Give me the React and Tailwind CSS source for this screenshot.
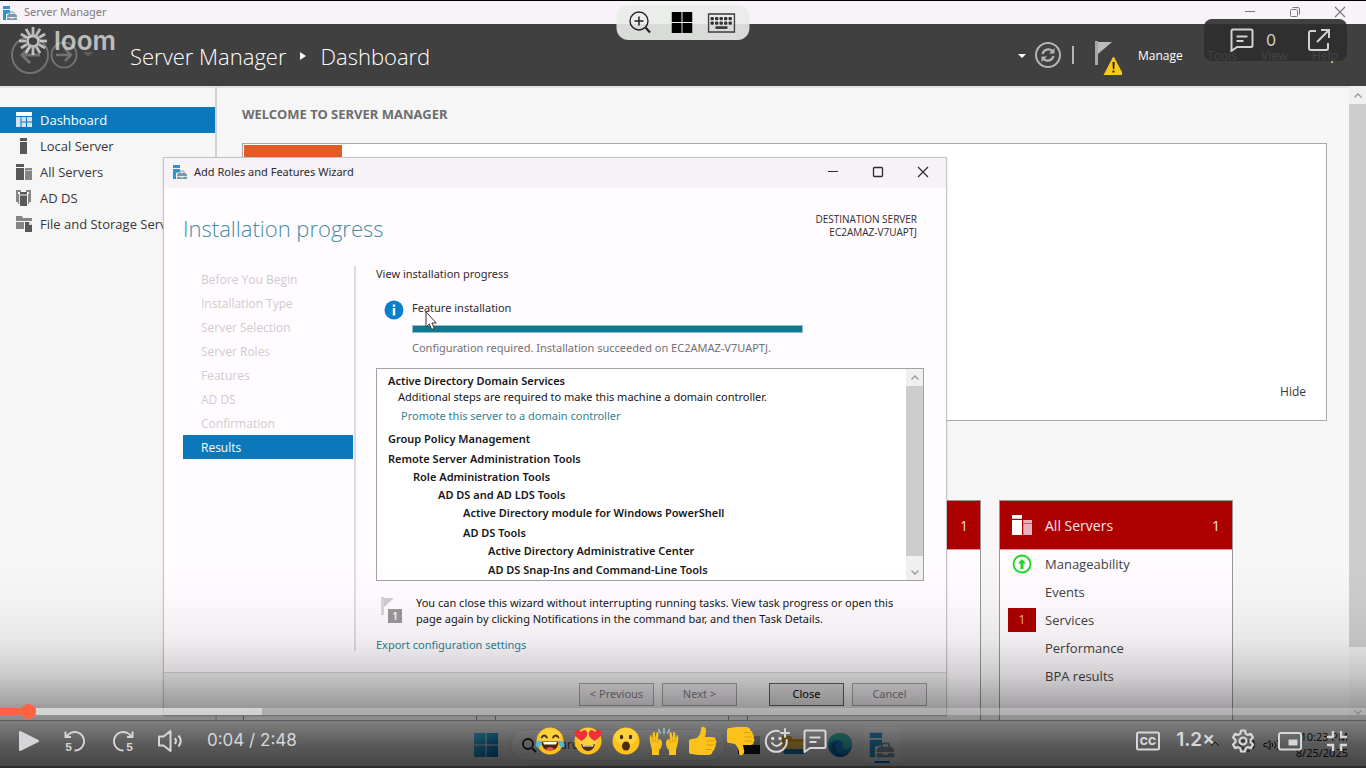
import React from "react";

function ServerManagerIcon({ className }) {
  return (
    <svg viewBox="0 0 16 16" className={className} aria-hidden="true">
      <path d="M1 1h7v3H1z" fill="#2f93cf" />
      <path d="M1 5h7v3L4 9v6H1z" fill="#2f93cf" />
      <path d="M8 9V7.500Q8 7 8.500 7h3q.5 0 .5.500V9" fill="none" stroke="#7899a6" />
      <path d="M5 10.500 6.500 9h7l1.500 1.500V12H5zM5 12.700h3.500v.8h3v-.8H15V15H5z" fill="#7899a6" />
    </svg>
  );
}

function DashboardIcon() {
  return (
    <svg viewBox="0 0 16 16" className="size-4" aria-hidden="true">
      <path d="M0 0h16v4H0z" fill="#fff" />
      <path d="M0 5h4.500v10H0zM5.500 5h4.500v4.500H5.500zM11 5h5v4.500h-5zM5.500 10.500h4.500V15H5.500zM11 10.500h5V15h-5z" fill="#cfe3f1" />
    </svg>
  );
}

function LocalServerIcon() {
  return (
    <svg viewBox="0 0 16 16" className="size-4" aria-hidden="true">
      <path d="M4 0h7v3H4zM4 4h7v12H4z" fill="#585858" />
    </svg>
  );
}

function AllServersIcon({ className, front, back }) {
  return (
    <svg viewBox="0 0 16 16" className={className} aria-hidden="true">
      <path d="M0 0h8v3H0zM0 4h8v12H0z" fill={front} />
      <path d="M9 4h7v2.500H9zM9 7h7v9H9z" fill={back} />
    </svg>
  );
}

function AdDsIcon() {
  return (
    <svg viewBox="0 0 16 16" className="size-4" aria-hidden="true">
      <path d="M0 0h5v2H2v10H0zM15 0h-5v2h3v10h2z" fill="#858585" />
      <path d="M4 2h7v2.500H4zM4 5.500h7V16H4z" fill="#585858" />
      <path d="M2 4h1.200v10H2zM12 4h1.200v10H12z" fill="#858585" />
    </svg>
  );
}

function StorageIcon() {
  return (
    <svg viewBox="0 0 16 16" className="size-4" aria-hidden="true">
      <path d="M0 0h6l1 2h9v3H0zM0 6h8v7H0z" fill="#858585" />
      <path d="M9 6h4l3 3v7H9z" fill="#585858" />
      <path d="M13 6v3h3z" fill="#ddd" />
    </svg>
  );
}

function Minimize() {
  return (
    <svg viewBox="0 0 12 12" className="size-3" fill="none" stroke="currentColor" aria-hidden="true">
      <path d="M1 5.500h10" />
    </svg>
  );
}
function Maximize() {
  return (
    <svg viewBox="0 0 12 12" className="size-3" fill="none" stroke="currentColor" aria-hidden="true">
      <rect x="1.500" y="1.500" width="9" height="9" rx="1" strokeWidth="1.300" />
    </svg>
  );
}
function Restore() {
  return (
    <svg viewBox="0 0 12 12" className="size-3" fill="none" stroke="currentColor" aria-hidden="true">
      <rect x="1.500" y="3.500" width="7" height="7" rx="1" />
      <path d="M3.500 1.500h5.500q1.500 0 1.500 1.500v5.500" />
    </svg>
  );
}
function Close() {
  return (
    <svg viewBox="0 0 12 12" className="size-3" fill="none" stroke="currentColor" aria-hidden="true">
      <path d="M1 1l10 10M11 1L1 11" strokeWidth="1.200" />
    </svg>
  );
}
function Chevron({ down }) {
  return (
    <svg viewBox="0 0 10 10" className="size-2.5" fill="none" stroke="#9a9a9a" strokeWidth="1.300" aria-hidden="true">
      <path d={down ? "M1.500 3.500 5 7l3.500-3.500" : "M1.500 6.500 5 3l3.500 3.500"} />
    </svg>
  );
}

const NAV = [
  ["Dashboard", <DashboardIcon />],
  ["Local Server", <LocalServerIcon />],
  ["All Servers", <AllServersIcon className="size-4" front="#585858" back="#858585" />],
  ["AD DS", <AdDsIcon />],
  ["File and Storage Services", <StorageIcon />],
];

function TitleBar() {
  return (
    <div className="flex h-6 shrink-0 items-center justify-between border-t border-black bg-[#f8f3f8] pl-0.5 text-[#7d7a7d]">
      <div className="flex items-center gap-1.5">
        <ServerManagerIcon className="size-4" />
        <span className="text-[11px] font-['Noto_Sans',sans-serif]">Server Manager</span>
      </div>
      <div className="flex gap-[33px] pr-5 pb-0.5">
        <button aria-label="Minimize"><Minimize /></button>
        <button aria-label="Restore"><Restore /></button>
        <button aria-label="Close window"><Close /></button>
      </div>
    </div>
  );
}

function HeaderBar() {
  return (
    <header className="flex h-[62px] shrink-0 items-center justify-between bg-[#404040] pl-2.5 text-white">
      <div className="flex items-center">
        <svg viewBox="0 0 84 40" className="h-10 w-[84px]" fill="none" stroke="#727272" aria-hidden="true">
          <circle cx="20" cy="20" r="18" strokeWidth="2" />
          <path d="M30 20H12m8-8-8 8 8 8" strokeWidth="3" />
          <circle cx="54" cy="20" r="12.500" strokeWidth="2" />
          <path d="M46 20h15m-6-6 6 6-6 6" strokeWidth="2.500" />
          <path d="M73 17h10l-5 5z" fill="#5c5c5c" stroke="none" />
        </svg>
        <div className="ml-9 flex items-center gap-3.5 pt-0.5 text-[22px] font-light">
          <span>Server Manager</span>
          <svg viewBox="0 0 6 8" className="h-2 w-1.5" aria-hidden="true"><path d="M0 0l6 4-6 4z" fill="#fff" /></svg>
          <span>Dashboard</span>
        </div>
      </div>
      <div className="flex items-center pr-7">
        <svg viewBox="0 0 60 40" className="h-10 w-[60px]" fill="none" aria-hidden="true">
          <path d="M0 19h8l-4 4z" fill="#fff" />
          <circle cx="30" cy="20" r="12" stroke="#b5b5b5" strokeWidth="2" />
          <path d="M24.500 19a6 6 0 0 1 10-3M35.500 21a6 6 0 0 1-10 3" stroke="#b5b5b5" strokeWidth="2.200" />
          <path d="M36.500 13v5.500H31zM23.500 27v-5.500H29z" fill="#b5b5b5" />
          <path d="M55 11v18" stroke="#b5b5b5" strokeWidth="2" />
        </svg>
        <svg viewBox="0 0 32 40" className="ml-3 h-10 w-8" aria-hidden="true">
          <path d="M5 6h3v24H5z" fill="#a8a8a8" />
          <path d="M8 7h14L8 19z" fill="#bcbcbc" />
          <path d="M23.500 22 33 40H14z" fill="#f9c81c" stroke="#f9c81c" strokeLinejoin="round" />
          <path d="M22.500 27h2.200l-.4 7h-1.400zM22.500 35.500h2v2h-2z" fill="#222" />
        </svg>
        <nav className="ml-4 flex w-[200px] justify-between pt-0.5 text-[12px]">
          <a href="#manage">Manage</a>
          <a href="#tools">Tools</a>
          <a href="#view">View</a>
          <a href="#help">Help</a>
        </nav>
      </div>
    </header>
  );
}

function ScrollBar({ className, thumb }) {
  return (
    <div className={"flex w-[17px] shrink-0 flex-col items-center bg-[#f0f0f0] " + className}>
      <div className="flex h-[17px] items-center"><Chevron /></div>
      <div className={"w-full bg-[#cdcdcd] " + thumb} />
      <div className="flex-1" />
      <div className="flex h-[17px] items-center"><Chevron down /></div>
    </div>
  );
}

function CollapsedTile({ count }) {
  return (
    <section className="h-[260px] w-[234px] shrink-0 border border-[#979597] bg-[#fffbff]">
      <div className="flex h-[49px] items-center justify-end border-b border-[#e58e9c] bg-[#ac0000] px-3 text-[14px] text-[#f6dede]">{count}</div>
    </section>
  );
}

function ServersTile() {
  const rows = ["Manageability", "Events", "Services", "Performance", "BPA results"];
  return (
    <section className="h-[260px] w-[234px] shrink-0 border border-[#979597] bg-[#fffbff]">
      <div className="flex h-[49px] items-center border-b border-[#e58e9c] bg-[#ac0000] pr-3 text-[14px] text-[#f8e4e6]">
        <div className="flex w-11 justify-center"><AllServersIcon className="size-5" front="#fff" back="#e6b3bb" /></div>
        <span className="pt-px pl-px">All Servers</span>
        <span className="ml-auto pt-px">1</span>
      </div>
      <div className="flex flex-col text-[12px] text-[#424042]">
        {rows.map((r, i) => (
          <div key={r} className="flex h-7 items-center">
            <div className="flex w-11 justify-center">
              {i === 0 && (
                <svg viewBox="0 0 20 20" className="size-5" aria-hidden="true">
                  <circle cx="10" cy="10" r="8.500" fill="none" stroke="#1fd51f" strokeWidth="1.800" />
                  <path d="M10 5l4 4.500h-2.500V15h-3V9.500H6z" fill="#1fd51f" />
                </svg>
              )}
              {i === 2 && <span className="flex h-6 w-7 items-center justify-center bg-[#ac0000] text-[#f3b4b4]">1</span>}
            </div>
            <a href="#servers" className="pt-0.5 pl-px text-[13px]">{r}</a>
          </div>
        ))}
      </div>
    </section>
  );
}

const STEPS = ["Before You Begin", "Installation Type", "Server Selection", "Server Roles", "Features", "AD DS", "Confirmation", "Results"];

const RESULTS = [
  ["Group Policy Management", "mt-[7px]"],
  ["Remote Server Administration Tools", "mt-1"],
  ["Role Administration Tools", "mt-0.5 pl-[25px]"],
  ["AD DS and AD LDS Tools", "mt-0.5 pl-[50px]"],
  ["Active Directory module for Windows PowerShell", "mt-0.5 pl-[75px]"],
  ["AD DS Tools", "mt-1 pl-[75px]"],
  ["Active Directory Administrative Center", "mt-0.5 pl-[100px]"],
  ["AD DS Snap-Ins and Command-Line Tools", "mt-[3px] pl-[100px]"],
];

function WizardButton({ children, strong }) {
  return (
    <button className={"h-[23px] w-[75px] border text-[11px] " + (strong ? "border-[#5e5c5e] bg-[#dedcde] text-black" : "border-[#a3a1a3] bg-[#e9e5e9] text-[#7d7a7d]")}>
      {children}
    </button>
  );
}

function Wizard() {
  return (
    <div role="dialog" aria-label="Add Roles and Features Wizard" className="absolute top-[157px] left-[163px] w-[784px] border border-[#c4c2c4] bg-[#fffbff] font-['Noto_Sans',sans-serif] text-[11px] leading-4 text-[#2d2b2d] shadow-sm">
      <div className="flex h-[30px] items-center justify-between bg-[#f6f2f6] pr-[17px] pb-0.5 pl-2">
        <div className="flex items-center gap-1.5">
          <ServerManagerIcon className="size-4" />
          <span>Add Roles and Features Wizard</span>
        </div>
        <div className="flex gap-[33px]">
          <button aria-label="Minimize wizard"><Minimize /></button>
          <button aria-label="Maximize wizard"><Maximize /></button>
          <button aria-label="Close wizard"><Close /></button>
        </div>
      </div>
      <div className="flex h-[78px] items-start justify-between pr-[29px] pl-[19px]">
        <h2 className="pt-6 font-['Open_Sans',sans-serif] text-[22px] leading-8 font-light text-[#3f8ea3]">Installation progress</h2>
        <div className="pt-[25px] text-right font-['Open_Sans',sans-serif] text-[10px] leading-[13px]">DESTINATION SERVER<br />EC2AMAZ-V7UAPTJ</div>
      </div>
      <div className="flex h-[385px] pr-[22px] pl-[19px]">
        <ol className="w-[173px] shrink-0 border-r-2 border-[#dfdbdf] pt-px font-['Open_Sans',sans-serif] pr-px text-[12px] text-[#cfcccf]">
          {STEPS.map((s, i) => (
            <li key={s} className={"flex h-6 items-center pt-0.5 pl-[18px] " + (i === 7 ? "bg-[#0a78ba] text-white" : "")}>{s}</li>
          ))}
        </ol>
        <div className="flex min-w-0 flex-1 flex-col pl-5">
          <p>View installation progress</p>
          <div className="mt-[18px] flex gap-2 pl-2">
            <svg viewBox="0 0 20 20" className="size-5 shrink-0" aria-hidden="true">
              <circle cx="10" cy="10" r="9.500" fill="#0a80cc" />
              <path d="M8.800 4.500h2.400v2.200H8.800zM8.800 8h2.400v7.500H8.800z" fill="#fff" />
            </svg>
            <div>
              <p>Feature installation</p>
              <div role="progressbar" aria-valuenow={100} aria-label="Feature installation" className="mt-[9px] h-2 w-[391px] border border-[#8fc0c8] bg-[#0b7a90]" />
              <p className="mt-[7px] text-[#737173]">Configuration required. Installation succeeded on EC2AMAZ-V7UAPTJ.</p>
            </div>
          </div>
          <div className="mt-3 flex h-[213px] shrink-0 overflow-hidden border border-[#a3a1a8] bg-white text-[#171617]">
            <div className="flex-1 pt-1 pl-[11px]">
              <p className="font-semibold">Active Directory Domain Services</p>
              <p className="pl-2.5">Additional steps are required to make this machine a domain controller.</p>
              <p className="mt-[3px] pl-[13px]"><a href="#promote" className="text-[#2f8294]">Promote this server to a domain controller</a></p>
              {RESULTS.map(([t, c]) => <p key={t} className={"font-semibold " + c}>{t}</p>)}
            </div>
            <ScrollBar className="" thumb="h-[170px]" />
          </div>
          <div className="mt-3.5 flex items-start gap-3">
            <svg viewBox="0 0 28 28" className="h-7 w-7 shrink-0" aria-hidden="true">
              <path d="M5 2h3v18H5z" fill="#d9d6d9" />
              <path d="M8 3h10L8 12z" fill="#cfcccf" />
              <rect x="12" y="14" width="14" height="14" fill="#9a969a" />
              <text x="19" y="25" textAnchor="middle" fontSize="10" fontWeight="600" fill="#fff">1</text>
            </svg>
            <p className="w-[500px] text-[#171617]">You can close this wizard without interrupting running tasks. View task progress or open this page again by clicking Notifications in the command bar, and then Task Details.</p>
          </div>
          <a href="#export" className="mt-2.5 text-[#2f8294]">Export configuration settings</a>
        </div>
      </div>
      <div className="mt-[21px] flex h-[43px] items-center justify-end border-t border-[#d6d2d6] bg-[#f0f0f0] pr-[19px]">
        <div className="flex gap-2"><WizardButton>&lt; Previous</WizardButton><WizardButton>Next &gt;</WizardButton></div>
        <div className="ml-8 flex gap-2"><WizardButton strong>Close</WizardButton><WizardButton>Cancel</WizardButton></div>
      </div>
    </div>
  );
}

function TaskBar() {
  return (
    <footer className="relative flex h-12 shrink-0 items-center justify-center border-t border-[#a0a0a0] bg-[#e6e6e6]">
      <div className="flex items-center pl-2">
        <svg viewBox="0 0 24 24" className="size-6" aria-label="Start">
          <defs><linearGradient id="win" x1="0" y1="0" x2="1" y2="1"><stop offset="0" stopColor="#3ec0e6" /><stop offset="1" stopColor="#0067b8" /></linearGradient></defs>
          <path d="M0 0h11.500v11.500H0zM12.500 0H24v11.500H12.500zM0 12.500h11.500V24H0zM12.500 12.500H24V24H12.500z" fill="url(#win)" />
        </svg>
        <div className="ml-3 flex h-8 w-[216px] items-center gap-2.5 rounded-full border border-[#d5d5d5] bg-[#f0f0f0] pl-2.5 text-[12px] text-[#444]">
          <svg viewBox="0 0 16 16" className="size-4" fill="none" stroke="#222" strokeWidth="1.800" aria-hidden="true"><circle cx="7" cy="7" r="5" /><path d="m11 11 4 4" /></svg>
          Search
        </div>
        <svg viewBox="0 0 24 24" className="ml-2.5 size-6" aria-hidden="true"><path d="M8 3h16v9H8z" fill="#aaa" /><path d="M2 12h22v9H2z" fill="#151515" /></svg>
        <svg viewBox="0 0 28 24" className="ml-5 h-6 w-7" aria-hidden="true"><path d="M2 3h9l2 3h13v14H2z" fill="#d69a2a" /><path d="M2 9h24v9H2z" fill="#f0bd45" /><path d="M4 16h20v5H4z" fill="#1777b8" /></svg>
        <svg viewBox="0 0 24 24" className="ml-5 size-6" aria-hidden="true">
          <circle cx="12" cy="12" r="12" fill="#1583c7" />
          <path d="M0 12C0 4 6 0 12 0c7 0 12 5 12 10 0 4-3 6-6 6-3 0-4-1-3-3 1-3-1-6-5-6-5 0-9 3-10 7z" fill="#39b8b0" />
          <path d="M10 7c-4 3-4 10 1 13 4 2 8 1 10-1-3 5-9 6-13 4C1 20 2 9 10 7z" fill="#125ea8" />
        </svg>
        <div className="ml-3 flex h-9 w-9 flex-col items-center justify-between rounded bg-[#f3f3f3]/60 pt-1">
          <ServerManagerIcon className="size-7" />
          <span className="h-0.5 w-4 rounded bg-[#0078d4]" />
        </div>
      </div>
      <div className="absolute right-[18px] flex items-center gap-4 text-right font-['Noto_Sans',sans-serif] text-[11px] leading-4 text-[#1c1c1c]">
        <svg viewBox="0 0 70 16" className="h-4 w-[70px]" fill="none" stroke="#222" aria-hidden="true">
          <path d="m1 9 4-4 4 4M30 4h14v7H30zM34 14h6" />
          <path d="M54 6.500h2.500L60 3.500v9l-3.500-3H54zM62 6q1.500 2 0 4M64.500 4.500q3 3.500 0 7M67 3q4 5 0 10" />
        </svg>
        <div>10:23 PM<br />8/25/2025</div>
      </div>
    </footer>
  );
}

function LoomLogo() {
  return (
    <a href="#loom" aria-label="loom home" className="absolute top-[25px] left-[18px] flex items-center gap-1.5 text-white/65">
      <svg viewBox="0 0 30 30" className="size-[30px]" fill="none" stroke="currentColor" strokeWidth="2.800" aria-hidden="true">
        <circle cx="15" cy="15" r="5.500" />
        {[0, 30, 60, 90, 120, 150, 180, 210, 240, 270, 300, 330].map((a) => (
          <path key={a} d="M15 1v7" transform={`rotate(${a} 15 15)`} />
        ))}
      </svg>
      <span className="font-[Inter] text-[26px] leading-8 font-semibold">loom</span>
    </a>
  );
}

function CommentIcon({ className }) {
  return (
    <svg viewBox="0 0 24 24" className={className} fill="none" stroke="currentColor" strokeWidth="2" strokeLinejoin="round" aria-hidden="true">
      <path d="M2 1.500h19q1.500 0 1.500 1.500v14.500q0 1.500-1.500 1.500H7l-5.500 4V3q0-1.500 1.500-1.500M6.500 8.500h11M6.500 13h7" />
    </svg>
  );
}

function TopOverlays() {
  return (
    <>
      <div className="absolute top-[5px] left-1/2 flex h-[35px] w-[133px] -translate-x-1/2 items-center justify-between rounded-xl bg-[#e9ece9]/90 pr-3.5 pl-3">
        <button aria-label="Zoom in">
          <svg viewBox="0 0 24 24" className="size-6" fill="none" stroke="#222" aria-hidden="true">
            <circle cx="10.500" cy="10" r="9" strokeWidth="1.400" /><path d="M6 10h9M10.500 5.500v9" strokeWidth="1.500" /><path d="m17 16.500 4.500 5" strokeWidth="2.200" />
          </svg>
        </button>
        <button aria-label="Windows key" className="pl-1">
          <svg viewBox="0 0 21 21" className="size-[21px]" aria-hidden="true"><path d="M0 0h10v10H0zM11 0h10v10H11zM0 11h10v10H0zM11 11h10v10H11z" /></svg>
        </button>
        <button aria-label="Keyboard">
          <svg viewBox="0 0 28 20" className="h-5 w-7" fill="#333" aria-hidden="true">
            <rect x="1" y="1" width="26" height="18" fill="none" stroke="#444" strokeWidth="1.600" />
            {[3, 7.500, 12, 16.500, 21].map((x) => <g key={x}><rect x={x} y="4" width="3.400" height="3.200" rx="1" /><rect x={x} y="8.500" width="3.400" height="3.200" rx="1" /></g>)}
            <rect x="8" y="13.300" width="12" height="2.600" />
          </svg>
        </button>
      </div>
      <div className="absolute top-[19px] right-[19px] flex h-[42px] w-[143px] items-center justify-between rounded-lg bg-[#2d2d2d]/90 pr-4 pl-[26px] text-[#d2d2d2]">
        <button aria-label="Comments" className="flex items-center gap-3 font-[Inter] text-[16px]"><CommentIcon className="size-6" />0</button>
        <button aria-label="Open in new tab">
          <svg viewBox="0 0 24 24" className="size-6" fill="none" stroke="currentColor" strokeWidth="2" aria-hidden="true">
            <path d="M9 3H4Q2 3 2 5v15q0 2 2 2h15q2 0 2-2v-5M10 14 21.500 2.500M14 2h8v8" />
          </svg>
        </button>
      </div>
    </>
  );
}

function Face({ children }) {
  return (
    <svg viewBox="0 0 30 30" className="size-[30px]" aria-hidden="true">
      <circle cx="15" cy="15" r="13.500" fill="#fcc21b" />
      <ellipse cx="15" cy="11" rx="11" ry="9" fill="#ffd23c" />
      {children}
    </svg>
  );
}
function Thumb({ down }) {
  return (
    <svg viewBox="0 0 30 30" className={"size-[30px] " + (down ? "-scale-y-100" : "")} aria-hidden="true">
      <path d="M2 15q0-2 3-2l5-1q4-4 4-9 0-2.500 2.500-2.200Q20 2 19 6l-1 5h8q3 .5 2.500 3 2 2 0 4 1 2.500-1 4 .5 2.500-2 3.500 0 3-3.500 3.500H11l-6-1H4q-2 0-2-2z" fill="#fcc21b" />
      <path d="M20 15h7M20 19h6.500M19.500 23.500h5" stroke="#e39a10" strokeWidth="1.200" strokeLinecap="round" fill="none" />
    </svg>
  );
}

const EMOJIS = [
  ["Laugh", <Face>
    <path d="M6.500 11.500q2.700-4 5.500 0M18 11.500q2.700-4 5.500 0" fill="none" stroke="#47301b" strokeWidth="1.800" strokeLinecap="round" />
    <path d="M6.500 15.500h17q0 9-8.500 9t-8.500-9z" fill="#47250f" />
    <path d="M8 16h14l-1 2.500H9z" fill="#fff" />
    <path d="M10.500 23q4.500-4 9 0-4.500 2.500-9 0z" fill="#ef4d4d" />
    <path d="M6.500 14.500q-6 .5-6 4.500 1 3.500 4 2 2-2 2-6.500zM23.500 14.500q6 .5 6 4.500-1 3.500-4 2-2-2-2-6.500z" fill="#4bb7ec" />
  </Face>],
  ["Love", <Face>
    <path d="M8.500 15Q-1 9 2 5q3-3 6 1 4-4 6 0 1.500 5-5.500 9zM21.500 15Q31 9 28 5q-3-3-6 1-4-4-6 0-1.500 5 5.500 9z" fill="#ee3038" />
    <path d="M8 18q7 3 14 0-1.500 7-7 7t-7-7z" fill="#522d10" />
    <path d="M9.500 18.700q5.500 1.800 11 0l-.6 1.700h-9.800z" fill="#fff" />
  </Face>],
  ["Wow", <Face>
    <ellipse cx="10.500" cy="11" rx="1.700" ry="2.300" fill="#422b0d" /><ellipse cx="19.500" cy="11" rx="1.700" ry="2.300" fill="#422b0d" />
    <ellipse cx="15" cy="20" rx="4" ry="4.500" fill="#4a2b10" />
  </Face>],
  ["Celebrate", <svg viewBox="0 0 30 30" className="size-[30px]" aria-hidden="true">
    <path d="M15 2v6M9.500 3l2 4.500M20.500 3l-2 4.500" stroke="#a7c3cf" strokeWidth="1.500" />
    {["", "translate(30 0) scale(-1 1)"].map((t) => (
      <g key={t} transform={t}>
        <path d="M1 16q-1-6 1-7.500l1 5 1-7q1.500-1.200 2 0l.2 6 1.300-6q1.500-1 2 0L9 14l1-1q3 .5 3 4 0 5-3 7v5H3v-5z" fill="#fcc21b" />
        <path d="M3.700 13v3M6.300 13v3M9 13.500 8.500 17" stroke="#e5a012" fill="none" />
      </g>
    ))}
  </svg>],
  ["Like", <Thumb />],
  ["Dislike", <Thumb down />],
];

function Player() {
  return (
    <div className="absolute inset-x-0 bottom-0 font-[Inter] text-[#d6d6da]">
      <div className="flex h-[200px] flex-col justify-end bg-[linear-gradient(to_bottom,rgba(0,0,0,0)_0px,rgba(0,0,0,0.015)_32px,rgba(0,0,0,0.06)_72px,rgba(0,0,0,0.175)_107px,rgba(0,0,0,0.35)_137px,rgba(0,0,0,0.45)_154px,rgba(0,0,0,0.61)_177px,rgba(0,0,0,0.71)_200px)]">
        <div role="slider" aria-label="Seek" aria-valuenow={4} aria-valuemax={168} tabIndex={0} className="flex h-[7px] items-center bg-white/25">
          <div className="h-full w-7 bg-[#ff6340]" />
          <div className="-ml-[7px] size-[15px] shrink-0 rounded-full bg-[#ff6340]" />
          <div className="-ml-2 h-full w-[234px] bg-white/45 [clip-path:inset(0_0_0_8px)]" />
        </div>
        <div className="grid h-[53px] grid-cols-[1fr_auto_1fr] items-center border-b-2 border-[#2c2c2c]">
          <div className="flex items-center pl-4">
            <button aria-label="Play"><svg viewBox="0 0 24 24" className="size-6" aria-hidden="true"><path d="M4 3v18l18-9z" fill="currentColor" stroke="currentColor" strokeWidth="2" strokeLinejoin="round" /></svg></button>
            <button aria-label="Back 5 seconds" className="ml-[23px]">
              <svg viewBox="0 0 24 24" className="size-6" fill="none" stroke="currentColor" strokeWidth="2" aria-hidden="true"><path d="M2.500 2.500V8H8M3.500 8a9.300 9.300 0 1 1 8 13.500" /><text x="2" y="22" fontSize="11" fontWeight="700" fill="currentColor" stroke="none">5</text></svg>
            </button>
            <button aria-label="Forward 5 seconds" className="ml-6">
              <svg viewBox="0 0 24 24" className="size-6" fill="none" stroke="currentColor" strokeWidth="2" aria-hidden="true"><path d="M21.500 2.500V8H16M20.500 8a9.300 9.300 0 1 0-8 13.500" /><text x="15" y="22" fontSize="11" fontWeight="700" fill="currentColor" stroke="none">5</text></svg>
            </button>
            <button aria-label="Volume" className="ml-[22px]">
              <svg viewBox="0 0 26 24" className="h-6 w-[26px]" fill="none" stroke="currentColor" strokeWidth="2" strokeLinejoin="round" aria-hidden="true"><path d="M2 7.500h4.500L13.500 2v20l-7-5.500H2zM18 9q2 3 0 6" /><path d="M21.500 6.500q4.500 5.500 0 11" /></svg>
            </button>
            <span className="ml-6 text-[17px]">0:04 / 2:48</span>
          </div>
          <div className="flex items-center gap-2 pr-1">
            {EMOJIS.map(([label, icon]) => <button key={label} aria-label={label}>{icon}</button>)}
            <button aria-label="More reactions" className="mx-px">
              <svg viewBox="0 0 26 26" className="mr-1 size-[26px]" fill="none" stroke="currentColor" strokeWidth="2" strokeLinecap="round" aria-hidden="true"><path d="M15 3.200A10.500 10.500 0 1 0 22.700 12M8 15q4.500 6 9.500 0M21 1v8M17 5h8" /><circle cx="8.700" cy="10.500" r=".8" fill="currentColor" /><circle cx="16" cy="10.500" r=".8" fill="currentColor" /></svg>
            </button>
            <button aria-label="Add comment"><CommentIcon className="size-6" /></button>
          </div>
          <div className="flex items-center justify-end pr-[17px]">
            <button aria-label="Captions">
              <svg viewBox="0 0 24 20" className="h-5 w-6" fill="none" stroke="currentColor" strokeWidth="2" aria-hidden="true"><rect x="1" y="1.500" width="22" height="17" rx="1.500" /><text x="12" y="14" textAnchor="middle" fontSize="11" fontWeight="800" fill="currentColor" stroke="none">CC</text></svg>
            </button>
            <button aria-label="Playback speed" className="ml-4 text-[19px] font-semibold">1.2×</button>
            <button aria-label="Settings" className="ml-4">
              <svg viewBox="0 0 24 24" className="size-6" fill="none" stroke="currentColor" strokeWidth="2.200" strokeLinejoin="round" aria-hidden="true"><path d="M10 1.500h4l.7 3.300 2 1.100 3.200-1 2 3.500L19.500 11v2l2.400 2.600-2 3.500-3.200-1-2 1.100-.7 3.300h-4l-.7-3.300-2-1.100-3.200 1-2-3.500L4.500 13v-2L2.100 8.400l2-3.500 3.200 1 2-1.100z" /><circle cx="12" cy="12" r="3.500" /></svg>
            </button>
            <button aria-label="Picture in picture" className="ml-[23px]">
              <svg viewBox="0 0 24 20" className="h-5 w-6" fill="none" stroke="currentColor" strokeWidth="2" aria-hidden="true"><rect x="1" y="2" width="22" height="16.500" rx="2" /><rect x="10.500" y="8.500" width="9" height="6" fill="currentColor" stroke="none" /></svg>
            </button>
            <button aria-label="Exit full screen" className="ml-[23px]">
              <svg viewBox="0 0 24 24" className="size-6" fill="none" stroke="currentColor" strokeWidth="2.400" aria-hidden="true"><path d="M8 2v6H2M16 2v6h6M8 22v-6H2M16 22v-6h6" /></svg>
            </button>
          </div>
        </div>
      </div>
    </div>
  );
}

export default function App() {
  return (
    <div className="relative flex h-screen flex-col overflow-hidden bg-[#f6f6f6] font-['Open_Sans','Noto_Sans',sans-serif]">
      <TitleBar />
      <HeaderBar />
      <div className="flex min-h-0 flex-1">
        <nav className="w-[217px] shrink-0 border-t-2 border-r-2 border-t-[#e2e2e2] border-r-[#d2d0d2] pt-[19px] text-[13px] text-[#383638]">
          {NAV.map(([label, icon], i) => (
            <a key={label} href="#nav" className={"flex h-[26px] items-center gap-2 overflow-hidden pl-4 whitespace-nowrap " + (i === 0 ? "bg-[#0a78ba] text-white" : "")}>
              <span className="shrink-0">{icon}</span><span className="pt-0.5">{label}</span>
            </a>
          ))}
        </nav>
        <main className="min-w-0 flex-1 overflow-hidden border-t-2 border-[#e2e2e2] pr-[22px] pl-[25px]">
          <h1 className="mt-4 font-['Noto_Sans',sans-serif] text-[13px] leading-5 font-bold text-[#6f6d6f]">WELCOME TO SERVER MANAGER</h1>
          <section className="mt-[19px] flex h-[278px] items-start justify-between border border-[#aaa8aa] bg-white p-px">
            <div className="h-[228px] w-[98px] bg-[#e25d26]" />
            <button className="self-end pr-[19px] pb-[18px] text-[12px] text-[#383638]">Hide</button>
          </section>
          <div className="mt-[79px] flex gap-[18px] pl-px">
            <CollapsedTile />
            <CollapsedTile />
            <CollapsedTile count="1" />
            <ServersTile />
          </div>
        </main>
        <ScrollBar className="pt-px" thumb="h-[543px]" />
      </div>
      <TaskBar />
      <Wizard />
      <svg viewBox="0 0 12 20" className="absolute top-[311px] left-[425px] h-5 w-3" aria-hidden="true">
        <path d="M1 1v15l3.300-3 2.400 5.500 2.600-1.100L7 12h4.300z" fill="#fff" stroke="#333" />
      </svg>
      <LoomLogo />
      <TopOverlays />
      <Player />
    </div>
  );
}
